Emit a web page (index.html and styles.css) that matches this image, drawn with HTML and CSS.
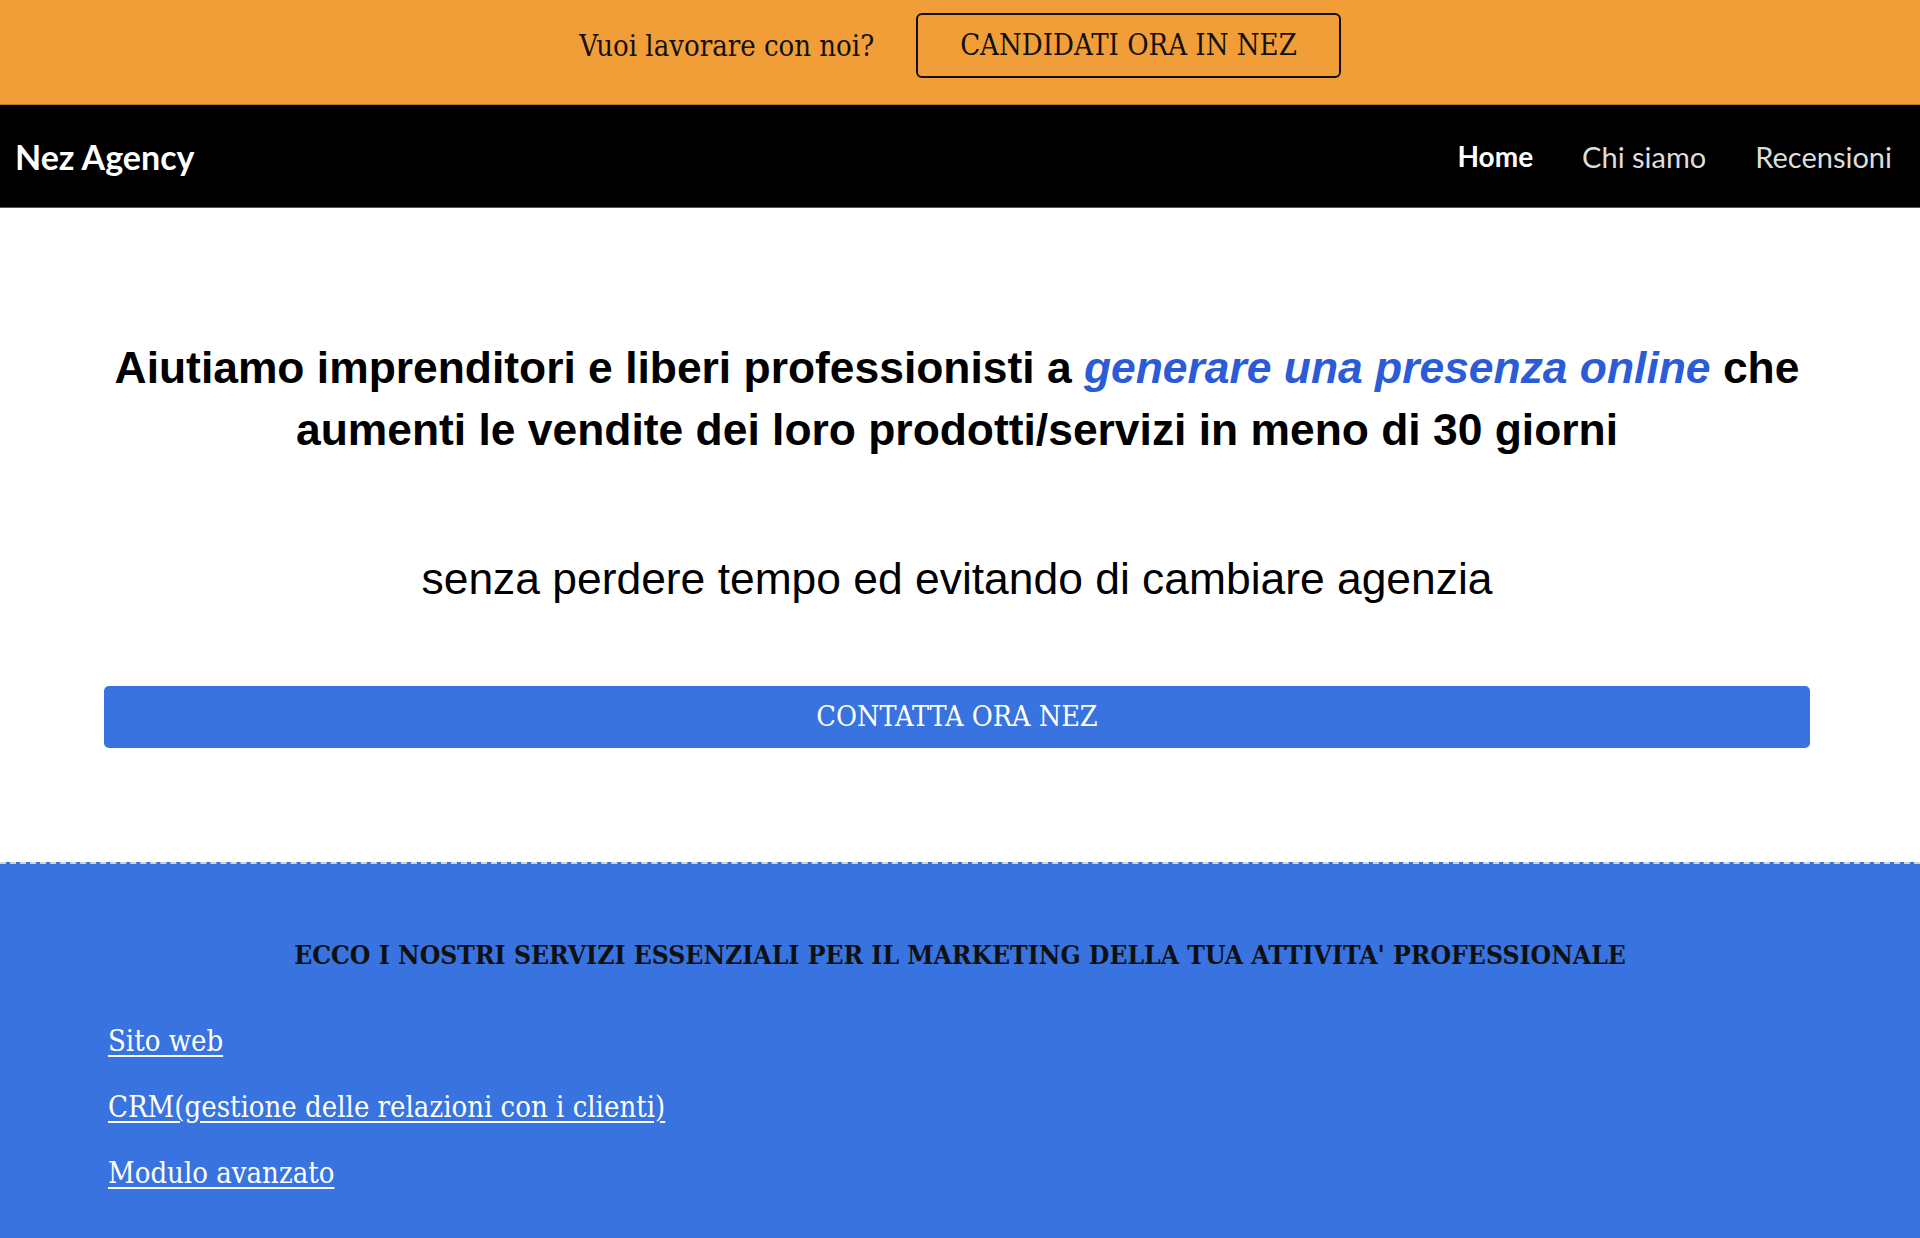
FILE: index.html
```html
<!DOCTYPE html>
<html lang="it">
<head>
  <meta charset="UTF-8">
  <meta name="viewport" content="width=device-width, initial-scale=1.0">
  <title>Nez Agency</title>
  <link rel="stylesheet" href="styles.css">
</head>
<body>
  <div class="topbar">
    <span class="topbar-text">Vuoi lavorare con noi?</span>
    <a class="apply-btn" href="#">CANDIDATI ORA IN NEZ</a>
  </div>

  <nav class="navbar">
    <a class="brand" href="#">Nez Agency</a>
    <ul class="nav-links">
      <li><a class="active" href="#">Home</a></li>
      <li><a href="#">Chi siamo</a></li>
      <li><a href="#">Recensioni</a></li>
    </ul>
  </nav>

  <section class="hero">
    <h1 class="hero-title">Aiutiamo imprenditori e liberi professionisti a <em>generare una presenza online</em> che aumenti le vendite dei loro prodotti/servizi in meno di 30 giorni</h1>
    <p class="hero-sub">senza perdere tempo ed evitando di cambiare agenzia</p>
    <a class="contact-btn" href="#">CONTATTA ORA NEZ</a>
  </section>

  <section class="services">
    <h2 class="services-title">ECCO I NOSTRI SERVIZI ESSENZIALI PER IL MARKETING DELLA TUA ATTIVITA' PROFESSIONALE</h2>
    <ul class="services-list">
      <li><a href="#">Sito web</a></li>
      <li><a href="#">CRM(gestione delle relazioni con i clienti)</a></li>
      <li><a href="#">Modulo avanzato</a></li>
    </ul>
  </section>
</body>
</html>
```

FILE: styles.css
```css
body {
  margin: 0;
  padding: 0;
  font-family: "DejaVu Serif", serif;
  background-color: #fff;
}

a {
  text-decoration: none;
  color: inherit;
}

.topbar {
  height: 105px;
  box-sizing: border-box;
  padding-top: 13px;
  background-color: #f19e38;
  display: flex;
  justify-content: center;
  align-items: flex-start;
  gap: 42px;
  border-bottom: 1px solid #b8772c;
}

.topbar-text,
.apply-btn,
.contact-btn,
.services {
  font-family: "DejaVu Serif Condensed", "DejaVu Serif", serif;
  font-stretch: condensed;
}

.topbar-text {
  font-size: 29px;
  line-height: 67px;
  color: #111;
}

.apply-btn {
  height: 65px;
  box-sizing: border-box;
  padding: 0 42px;
  border: 2px solid #111;
  border-radius: 6px;
  font-size: 29px;
  line-height: 61px;
  color: #111;
}

.navbar {
  height: 103px;
  box-sizing: border-box;
  background-color: #000;
  display: flex;
  justify-content: space-between;
  align-items: center;
  padding: 0 28px 0 15px;
  border-bottom: 1px solid #555;
  font-family: Lato, "Open Sans", sans-serif;
}

.brand {
  color: #fff;
  font-weight: bold;
  font-size: 34px;
}

.nav-links {
  list-style: none;
  margin: 0;
  padding: 0;
  display: flex;
  gap: 49px;
}

.nav-links a {
  color: #ddd;
  font-size: 29px;
}

.nav-links a.active {
  color: #fff;
  font-weight: bold;
  font-size: 28px;
}

.hero {
  padding: 129px 110px 114px 104px;
  display: flex;
  flex-direction: column;
  align-items: stretch;
  text-align: center;
  font-family: "Liberation Sans", Arial, sans-serif;
  color: #000;
}

.hero-title {
  margin: 0;
  font-size: 44.4px;
  line-height: 62px;
  font-weight: bold;
}

.hero-title em {
  color: #2b5bd6;
}

.hero-sub {
  margin: 87px 0 76px;
  font-size: 44.4px;
  line-height: 62px;
}

.contact-btn {
  display: block;
  height: 62px;
  line-height: 62px;
  background-color: #3873e0;
  border-radius: 5px;
  color: #fff;
  font-size: 28.5px;
}

.services {
  background-color: #3873e0;
  border-top: 2px dashed #d6d6d6;
  padding: 75px 0 60px;
  min-height: 300px;
}

.services-title {
  margin: 0;
  text-align: center;
  font-size: 26.3px;
  line-height: 32px;
  color: #111;
}

.services-list {
  list-style: none;
  margin: 51px 0 0;
  padding: 0 0 0 108px;
  display: flex;
  flex-direction: column;
  gap: 28px;
}

.services-list a {
  color: #fff;
  font-size: 29px;
  line-height: 38px;
  text-decoration: underline;
  text-underline-offset: 4px;
}
```
